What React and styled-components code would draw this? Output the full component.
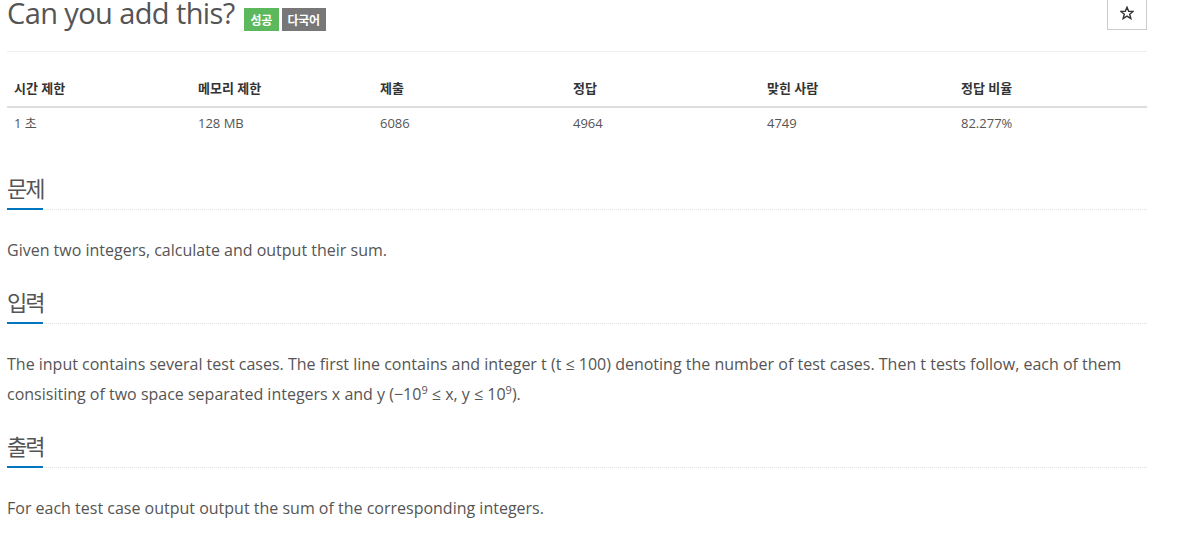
import React from 'react';
import styled, { createGlobalStyle } from 'styled-components';

const GlobalStyle = createGlobalStyle`
  html, body {
    margin: 0;
    padding: 0;
    background: #fff;
    overflow: hidden;
  }
  body {
    font-family: "Open Sans", "Noto Sans CJK KR", sans-serif;
    color: #555;
  }
`;

const stats = [
  { head: '시간 제한', value: '1 초', width: 184 },
  { head: '메모리 제한', value: '128 MB', width: 182 },
  { head: '제출', value: '6086', width: 193 },
  { head: '정답', value: '4964', width: 194 },
  { head: '맞힌 사람', value: '4749', width: 194 },
  { head: '정답 비율', value: '82.277%', width: 193 },
];

function StarIcon() {
  return (
    <svg width="14" height="14" viewBox="0 0 24 24" fill="none" stroke="#333" strokeWidth="2.4" strokeLinejoin="miter">
      <polygon points="12,2 14.9,9 22.5,9.3 16.6,14 18.6,21.5 12,17.3 5.4,21.5 7.4,14 1.5,9.3 9.1,9" />
    </svg>
  );
}

export default function App() {
  return (
    <Page>
      <GlobalStyle />
      <Header>
        <TitleRow>
          <Title>Can you add this?</Title>
          <Label $color="#5cb85c" $width={35}>성공</Label>
          <Label $color="#777" $width={44}>다국어</Label>
        </TitleRow>
        <StarButton>
          <StarIcon />
        </StarButton>
      </Header>

      <StatTable>
        {stats.map((s) => (
          <HeadCell key={s.head}>{s.head}</HeadCell>
        ))}
        {stats.map((s) => (
          <Cell key={s.head + '-v'}>{s.value}</Cell>
        ))}
      </StatTable>

      <Section>
        <Headline><Heading>문제</Heading></Headline>
        <Text>Given two integers, calculate and output their sum.</Text>
      </Section>

      <Section>
        <Headline><Heading>입력</Heading></Headline>
        <Text>
          The input contains several test cases. The first line contains and integer t (t ≤ 100) denoting the number of test cases. Then t tests follow, each of them consisiting of two space separated integers x and y (−10<sup>9</sup> ≤ x, y ≤ 10<sup>9</sup>).
        </Text>
      </Section>

      <Section>
        <Headline><Heading>출력</Heading></Headline>
        <Text>For each test case output output the sum of the corresponding integers.</Text>
      </Section>
    </Page>
  );
}

const Page = styled.div`
  width: 1140px;
  padding: 0 7px;
`;

const Header = styled.div`
  display: flex;
  justify-content: space-between;
  align-items: flex-start;
  margin-top: -4px;
  padding-bottom: 20px;
  border-bottom: 1px solid #eee;
`;

const TitleRow = styled.div`
  display: flex;
  align-items: flex-start;
  gap: 3px;
`;

const Title = styled.h1`
  margin: 0 6px 0 0;
  font-size: 29px;
  line-height: 34px;
  font-weight: 400;
  color: #555;
  letter-spacing: -0.6px;
`;

const Label = styled.span`
  display: inline-flex;
  align-items: center;
  justify-content: center;
  width: ${(p) => p.$width}px;
  height: 23px;
  margin-top: 12px;
  background: ${(p) => p.$color};
  color: #fff;
  font-size: 12px;
  font-weight: 700;
  letter-spacing: -0.3px;
`;

const StarButton = styled.button`
  display: flex;
  align-items: center;
  justify-content: center;
  width: 40px;
  height: 34px;
  padding: 0;
  margin: 0;
  background: #fff;
  border: 1px solid #ccc;
  border-radius: 0;
`;

const StatTable = styled.div`
  display: grid;
  grid-template-columns: ${stats.map((s) => s.width + 'px').join(' ')};
  margin-top: 18px;
  font-size: 13px;
`;

const HeadCell = styled.div`
  padding: 8px 7px;
  line-height: 20px;
  font-weight: 700;
  color: #333;
  border-bottom: 2px solid #ddd;
`;

const Cell = styled.div`
  padding: 5px 7px 10px;
  line-height: 20px;
  color: #555;
`;

const Section = styled.section`
  &:first-of-type {
    margin-top: 30px;
  }
`;

const Headline = styled.div`
  border-bottom: 1px dotted #e2e2e2;
  margin-bottom: 25px;
`;

const Heading = styled.h2`
  display: inline-block;
  margin: 0 0 -1px;
  padding-bottom: 5px;
  font-size: 22px;
  letter-spacing: -2px;
  line-height: 30px;
  font-weight: 400;
  color: #555;
  border-bottom: 2px solid #0076c0;
`;

const Text = styled.p`
  margin: 0 0 22px;
  font-size: 16px;
  line-height: 30px;
  color: #555;

  sup {
    font-size: 11px;
    line-height: 0;
    vertical-align: 6px;
  }
`;
